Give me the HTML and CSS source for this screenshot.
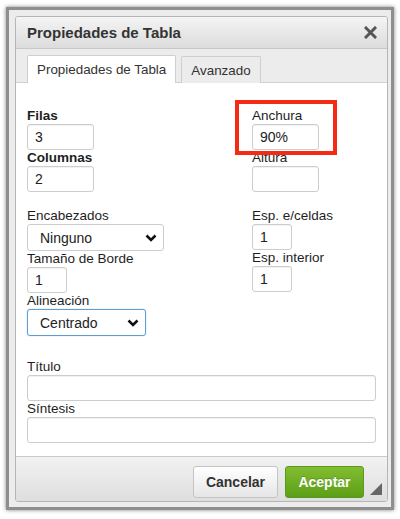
FILE: index.html
```html
<!DOCTYPE html>
<html lang="es">
<head>
<meta charset="utf-8">
<title>Propiedades de Tabla</title>
<link rel="stylesheet" href="styles.css">
</head>
<body>
<div class="frame">
  <div class="dialog">
    <div class="titlebar">
      <span class="title">Propiedades de Tabla</span>
      <svg class="close" width="13" height="13" viewBox="0 0 13 13"><path d="M2 2 L11 11 M11 2 L2 11" stroke="#555" stroke-width="3" stroke-linecap="square"/></svg>
    </div>
    <div class="tabs">
      <div class="tab active">Propiedades de Tabla</div>
      <div class="tab">Avanzado</div>
    </div>
    <div class="body">
      <div class="cols">
        <div class="col">
          <div class="label bold">Filas</div>
          <div class="input w-md">3</div>
          <div class="label bold">Columnas</div>
          <div class="input w-md">2</div>
          <div class="spacer"></div>
          <div class="label">Encabezados</div>
          <div class="select w-sel1"><span>Ninguno</span><svg width="12" height="8" viewBox="0 0 12 8"><path d="M1.5 1.5 L6 6 L10.5 1.5" fill="none" stroke="#111" stroke-width="2.6"/></svg></div>
          <div class="label">Tamaño de Borde</div>
          <div class="input w-sm">1</div>
          <div class="label">Alineación</div>
          <div class="select w-sel2 focus"><span>Centrado</span><svg width="12" height="8" viewBox="0 0 12 8"><path d="M1.5 1.5 L6 6 L10.5 1.5" fill="none" stroke="#111" stroke-width="2.6"/></svg></div>
        </div>
        <div class="col">
          <div class="label">Anchura</div>
          <div class="input w-md">90%</div>
          <div class="label">Altura</div>
          <div class="input w-md"></div>
          <div class="spacer"></div>
          <div class="label">Esp. e/celdas</div>
          <div class="input w-sm">1</div>
          <div class="label">Esp. interior</div>
          <div class="input w-sm">1</div>
          <div class="highlight"></div>
        </div>
      </div>
      <div class="wide">
        <div class="label">Título</div>
        <div class="input w-full"></div>
        <div class="label">Síntesis</div>
        <div class="input w-full"></div>
      </div>
    </div>
    <div class="footer">
      <div class="btn cancel">Cancelar</div>
      <div class="btn ok">Aceptar</div>
      <svg class="grip" width="12" height="12" viewBox="0 0 12 12"><path d="M12 0 L12 12 L0 12 Z" fill="#666"/></svg>
    </div>
  </div>
</div>
</body>
</html>
```
FILE: styles.css
```css
* { box-sizing: border-box; }
html, body { margin: 0; padding: 0; background: #fff; }
body {
  width: 400px;
  height: 519px;
  font-family: "Liberation Sans", Arial, Helvetica, sans-serif;
  color: #222;
  overflow: hidden;
}
.frame {
  margin: 7px 6px 0 6px;
  width: 388px;
  height: 503px;
  border: 3px solid #8e8e8e;
  box-shadow: 0 0 4px rgba(0,0,0,0.5);
  background: #ececec;
  padding: 6px 3px 5px 6px;
}
.dialog {
  width: 373px;
  height: 486px;
  border: 1px solid #b5b5b5;
  border-radius: 3px;
  background: #fff;
  display: flex;
  flex-direction: column;
  overflow: hidden;
  position: relative;
}
.titlebar {
  height: 32px;
  flex: none;
  display: flex;
  align-items: center;
  justify-content: space-between;
  padding: 0 10px 0 11px;
  background: linear-gradient(#f4f4f4, #dcdcdc);
  border-bottom: 1px solid #c8c8c8;
}
.title { font-size: 15px; font-weight: bold; color: #333; }
.close { display: block; }
.tabs {
  height: 34px;
  flex: none;
  display: flex;
  align-items: flex-end;
  gap: 5px;
  padding-left: 11px;
  background: #ececec;
  border-bottom: 1px solid #d0d0d0;
}
.tab {
  height: 27px;
  padding: 0 9px;
  display: flex;
  align-items: center;
  font-size: 13.4px;
  color: #333;
  background: #ececec;
  border: 1px solid #cfcfcf;
  border-bottom: none;
  border-radius: 2px 2px 0 0;
  margin-bottom: -1px;
}
.tab.active { background: #fff; height: 28px; }
.body {
  flex: 1;
  padding: 25px 12px 0 11px;
}
.cols {
  display: grid;
  grid-template-columns: 225px 1fr;
}
.col { display: flex; flex-direction: column; align-items: flex-start; position: relative; }
.spacer { height: 16px; }
.label {
  font-size: 13.5px;
  line-height: 16px;
  color: #1e1e1e;
}
.bold { font-weight: bold; }
.input {
  height: 26px;
  border: 1px solid #cdcdcd;
  border-radius: 3px;
  box-shadow: inset 0 1px 1px rgba(0,0,0,0.06);
  font-size: 14px;
  line-height: 24px;
  padding-left: 7px;
  color: #222;
  background: #fff;
}
.w-md { width: 67px; }
.w-sm { width: 40px; }
.w-full { width: 349px; }
.select {
  height: 27px;
  border: 1px solid #cdcdcd;
  border-radius: 3px;
  display: flex;
  align-items: center;
  justify-content: space-between;
  padding: 0 6px 0 12px;
  font-size: 14px;
  color: #222;
}
.w-sel1 { width: 137px; }
.w-sel2 { width: 119px; }
.select.focus { border-color: #5e9ed6; box-shadow: 0 0 1px #5e9ed6; }
.highlight {
  position: absolute;
  left: -17px;
  top: -8px;
  width: 102px;
  height: 55px;
  border: 4px solid #f52a14;
}
.wide {
  margin-top: 23px;
  display: flex;
  flex-direction: column;
}
.footer {
  height: 45px;
  flex: none;
  display: flex;
  align-items: center;
  justify-content: flex-end;
  gap: 7px;
  padding-right: 23px;
  background: linear-gradient(#f2f2f2, #dedede);
  border-top: 1px solid #cacaca;
  position: relative;
}
.btn {
  height: 32px;
  display: flex;
  align-items: center;
  justify-content: center;
  font-size: 14px;
  font-weight: bold;
  border-radius: 3px;
  margin-top: 5px;
}
.cancel {
  width: 85px;
  color: #333;
  background: linear-gradient(#ffffff, #e6e6e6);
  border: 1px solid #c4c4c4;
}
.ok {
  width: 79px;
  color: #fff;
  background: linear-gradient(#82bd31, #5c9f16);
  border: 1px solid #5b9a1e;
  text-shadow: 0 -1px 0 rgba(0,0,0,0.2);
}
.grip { position: absolute; right: 5px; bottom: 6px; }
```
